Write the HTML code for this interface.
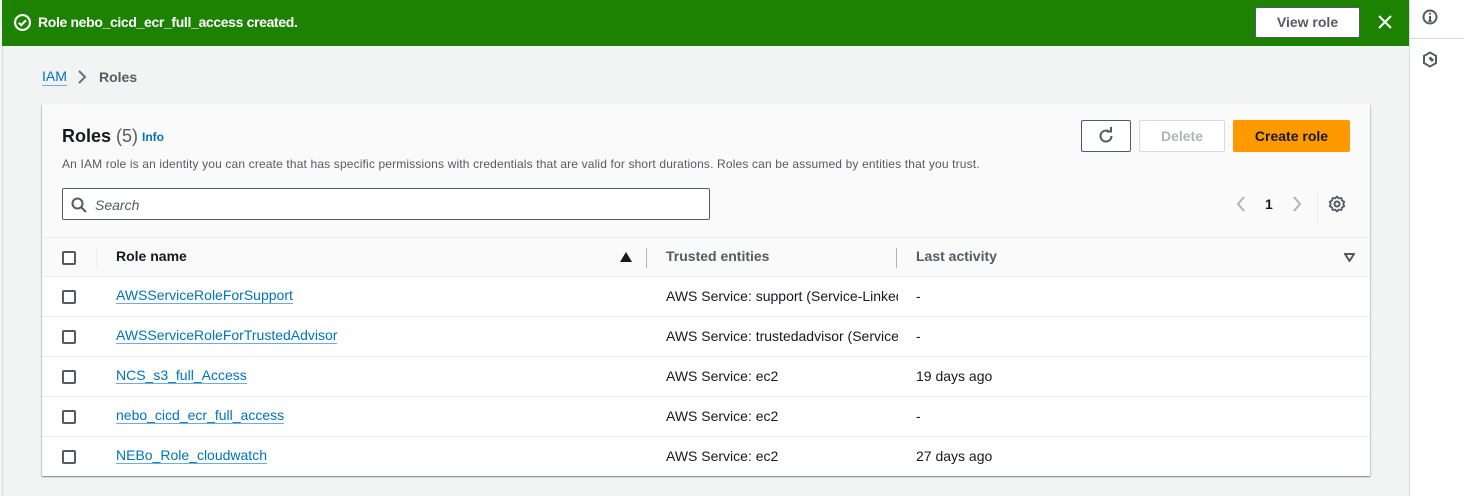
<!DOCTYPE html>
<html><head><meta charset="utf-8"><style>
*{box-sizing:border-box;margin:0;padding:0}
body{width:1464px;height:496px;overflow:hidden;background:#f2f3f3;font-family:"Liberation Sans",sans-serif;color:#16191f;position:relative}
.abs{position:absolute}
.flash{left:2px;top:0;width:1407px;height:46px;background:#1d8102;color:#fff;font-weight:bold;font-size:14px}
.side{left:1409px;top:0;width:55px;height:496px;background:#fff;border-left:1px solid #d5dbdb}
.leftline{left:2px;top:46px;width:1px;height:450px;background:#d5dbdb}
.card{left:42px;top:104px;width:1328px;height:372px;background:#fafafa;box-shadow:0 1px 1px rgba(0,28,36,.3),1px 1px 1px rgba(0,28,36,.15),-1px 1px 1px rgba(0,28,36,.15);border-radius:0}
.row{position:absolute;left:0;width:1328px;height:40px;border-top:1px solid #eaeded;background:#fff;font-size:14px}
.row .cb,.hdr .cb{position:absolute;left:20px;top:13px;width:14px;height:14px;border:2px solid #545b64;border-radius:2px;background:#fff}
.row a{position:absolute;left:74px;top:11px;color:#0073bb;text-decoration:none;border-bottom:1px solid #6aaedb;line-height:15px}
.row .t{position:absolute;left:624px;top:11px;width:232px;overflow:hidden;white-space:nowrap}
.row .l{position:absolute;left:874px;top:11px}
.dot{border-bottom:1px dashed #16191f}
.btn{position:absolute;height:32px;border-radius:2px;font-weight:bold;font-size:14px;text-align:center;line-height:30px}
</style></head><body>
<div class="abs leftline"></div>
<div class="abs flash">
  <svg class="abs" style="left:12px;top:14px" width="17" height="17" viewBox="0 0 16 16"><circle cx="8" cy="8" r="7" fill="none" stroke="#fff" stroke-width="2"/><path d="M4.5 8.2l2.3 2.3 4.5-4.6" fill="none" stroke="#fff" stroke-width="2"/></svg>
  <div class="abs" style="left:36px;top:14px;letter-spacing:-0.35px">Role nebo_cicd_ecr_full_access created.</div>
  <div class="abs" style="left:1253px;top:7px;width:105px;height:31px;background:#fff;border:1px solid #545b64;border-radius:2px;color:#545b64;text-align:center;line-height:29px">View role</div>
  <svg class="abs" style="left:1376px;top:15px" width="14" height="14" viewBox="0 0 14 14"><path d="M1 1l12 12M13 1L1 13" stroke="#fff" stroke-width="2"/></svg>
</div>
<div class="abs side">
  <svg class="abs" style="left:12px;top:9px" width="16" height="16" viewBox="0 0 16 16"><circle cx="8" cy="8" r="6.5" fill="none" stroke="#545b64" stroke-width="2"/><path d="M8 7v5M6.5 12h3" stroke="#545b64" stroke-width="2"/><circle cx="8" cy="4.7" r="1.1" fill="#545b64"/></svg>
  <div class="abs" style="left:0;top:38px;width:55px;height:1px;background:#d5dbdb"></div>
  <svg class="abs" style="left:12px;top:51px" width="16" height="17" viewBox="0 0 16 17"><path d="M8 1.5l6 3.4v7.2L8 15.5 2 12.1V4.9z" fill="none" stroke="#545b64" stroke-width="2"/><path d="M7.5 6.5l3.5 3.5" stroke="#545b64" stroke-width="3"/></svg>
</div>
<div class="abs" style="left:42px;top:68px;font-size:14px;color:#0073bb;border-bottom:1px solid #6aaedb;line-height:17px">IAM</div>
<svg class="abs" style="left:77px;top:70px" width="10" height="14" viewBox="0 0 10 14"><path d="M2 1l6 6-6 6" fill="none" stroke="#687078" stroke-width="2"/></svg>
<div class="abs" style="left:99px;top:69px;font-size:14px;color:#545b64;font-weight:bold">Roles</div>

<div class="abs card">
  <div class="abs" style="left:20px;top:22px;font-size:18px;font-weight:bold">Roles <span style="font-weight:normal;color:#545b64">(5)</span></div>
  <div class="abs" style="left:100px;top:26px;font-size:12px;font-weight:bold;color:#0073bb">Info</div>
  <div class="abs" style="left:20px;top:53px;font-size:12px;color:#545b64;white-space:nowrap;letter-spacing:0.15px">An IAM role is an identity you can create that has specific permissions with credentials that are valid for short durations. Roles can be assumed by entities that you trust.</div>
  <div class="btn" style="left:1039px;top:16px;width:50px;border:1px solid #545b64;background:#fff">
    <svg style="margin-top:6px" width="18" height="18" viewBox="0 0 18 18"><path d="M14.5 9A5.5 5.5 0 1 1 12.5 4.8" fill="none" stroke="#545b64" stroke-width="2"/><path d="M9.5 4.5h4.5V0" fill="none" stroke="#545b64" stroke-width="2"/></svg>
  </div>
  <div class="btn" style="left:1097px;top:16px;width:86px;border:1px solid #d5dbdb;background:#fff;color:#aab7b8">Delete</div>
  <div class="btn" style="left:1191px;top:16px;width:117px;background:#ff9900;color:#16191f;line-height:32px">Create role</div>
  <div class="abs" style="left:20px;top:84px;width:648px;height:32px;background:#fff;border:1px solid #545b64;border-radius:2px">
    <svg class="abs" style="left:8px;top:8px" width="16" height="16" viewBox="0 0 16 16"><circle cx="6.5" cy="6.5" r="5" fill="none" stroke="#545b64" stroke-width="2"/><path d="M10 10l5 5" stroke="#545b64" stroke-width="2"/></svg>
    <div class="abs" style="left:32px;top:8px;font-size:14px;font-style:italic;color:#545b64">Search</div>
  </div>
  <svg class="abs" style="left:1194px;top:92px" width="10" height="16" viewBox="0 0 10 16"><path d="M8 1L2 8l6 7" fill="none" stroke="#aab7b8" stroke-width="2"/></svg>
  <div class="abs" style="left:1223px;top:92px;font-size:14px;font-weight:bold">1</div>
  <svg class="abs" style="left:1250px;top:92px" width="10" height="16" viewBox="0 0 10 16"><path d="M2 1l6 7-6 7" fill="none" stroke="#aab7b8" stroke-width="2"/></svg>
  <div class="abs" style="left:1275px;top:88px;width:1px;height:32px;background:#eaeded"></div>
  <svg class="abs" style="left:1286px;top:91px" width="18" height="18" viewBox="0 0 18 18"><circle cx="9" cy="9" r="2.5" fill="none" stroke="#545b64" stroke-width="2"/><path d="M9 1.5l1.8 1.9 2.6-.4.6 2.6 2.3 1.2L15.2 9l1.1 2.2-2.3 1.2-.6 2.6-2.6-.4L9 16.5l-1.8-1.9-2.6.4-.6-2.6-2.3-1.2L2.8 9 1.7 6.8 4 5.6l.6-2.6 2.6.4z" fill="none" stroke="#545b64" stroke-width="1.8" stroke-linejoin="round"/></svg>

  <div class="hdr abs" style="left:0;top:133px;width:1328px;height:39px;border-top:1px solid #eaeded;font-size:14px;font-weight:bold;color:#545b64">
    <div class="cb"></div>
    <div class="abs" style="left:54px;top:10px;width:1px;height:20px;background:#eaeded"></div>
    <div class="abs" style="left:74px;top:10px;color:#16191f">Role name</div>
    <svg class="abs" style="left:578px;top:14px" width="12" height="10" viewBox="0 0 12 10"><path d="M6 0l6 10H0z" fill="#16191f"/></svg>
    <div class="abs" style="left:604px;top:10px;width:1px;height:20px;background:#aab7b8"></div>
    <div class="abs" style="left:624px;top:10px">Trusted entities</div>
    <div class="abs" style="left:854px;top:10px;width:1px;height:20px;background:#aab7b8"></div>
    <div class="abs" style="left:874px;top:10px">Last activity</div>
    <svg class="abs" style="left:1302px;top:15px" width="11" height="9" viewBox="0 0 11 9"><path d="M1 1h9L5.5 8z" fill="none" stroke="#545b64" stroke-width="2"/></svg>
  </div>
  <div class="row" style="top:172px"><div class="cb"></div><a>AWSServiceRoleForSupport</a><div class="t">AWS Service: support (<span class="dot">Service-Linked role)</span></div><div class="l">-</div></div>
  <div class="row" style="top:212px"><div class="cb"></div><a>AWSServiceRoleForTrustedAdvisor</a><div class="t">AWS Service: trustedadvisor (<span class="dot">Service-Linked role)</span></div><div class="l">-</div></div>
  <div class="row" style="top:252px"><div class="cb"></div><a>NCS_s3_full_Access</a><div class="t">AWS Service: ec2</div><div class="l">19 days ago</div></div>
  <div class="row" style="top:292px"><div class="cb"></div><a>nebo_cicd_ecr_full_access</a><div class="t">AWS Service: ec2</div><div class="l">-</div></div>
  <div class="row" style="top:332px"><div class="cb"></div><a>NEBo_Role_cloudwatch</a><div class="t">AWS Service: ec2</div><div class="l">27 days ago</div></div>
</div>
</body></html>
